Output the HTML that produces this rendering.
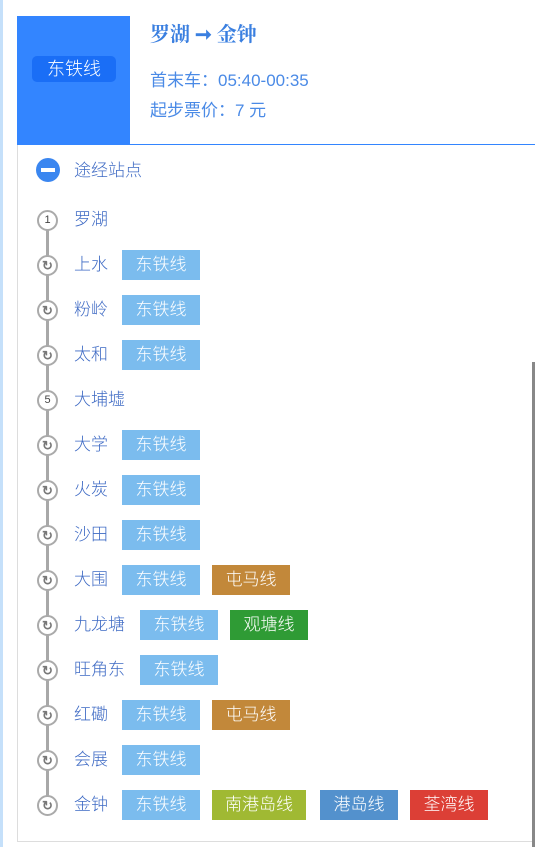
<!DOCTYPE html><html><head><meta charset="utf-8"><style>
body{margin:0;width:535px;height:847px;background:#fff;position:relative;overflow:hidden;font-family:"Liberation Sans","Noto Sans CJK SC",sans-serif}
.ab{position:absolute}
.strip{left:0;top:0;width:3px;height:847px;background:#c5e0fa}
.panel{left:17px;top:16px;width:530px;height:825px;border-left:1px solid #ddd;border-bottom:1px solid #ddd}
.hb{left:17px;top:16px;width:113px;height:129px;background:#3385ff}
.pill{left:32px;top:56px;width:84px;height:26px;background:#1a6ef6;border-radius:5px;color:#fff;font-size:18px;text-align:center;line-height:26px;font-weight:300}
.hl{left:130px;top:144px;width:405px;height:1px;background:#3385ff}
.title{left:150px;top:18px;font-size:20px;font-weight:bold;color:#3a7fe0;font-family:"Liberation Serif","Noto Serif CJK SC",serif}
.info{left:150px;font-size:17px;color:#4a8ae6}
.st{left:74px;font-size:17px;color:#3e6ac4;line-height:30px;font-weight:300}
.tag{height:30px;line-height:30px;color:#fff;font-size:17px;text-align:center;font-weight:300}
.ic{left:37px;width:17px;height:17px;border:2px solid #aaa;border-radius:50%;background:#fff;font-size:11px;text-align:center;line-height:17px;color:#444;box-sizing:content-box}
.line{left:46px;top:220px;width:3px;height:585px;background:#a8a8a8}
.sb{left:532px;top:362px;width:3px;height:485px;background:#888}
</style></head><body>
<div class="ab strip"></div>
<div class="ab panel"></div>
<div class="ab hb"></div>
<div class="ab pill">东铁线</div>
<div class="ab hl"></div>
<div class="ab title">罗湖 ➞ 金钟</div>
<div class="ab info" style="top:66px">首末车：05:40-00:35</div>
<div class="ab info" style="top:96px">起步票价：7 元</div>
<div class="ab" style="left:36px;top:158px;width:24px;height:24px;border-radius:50%;background:#3a86f0"></div>
<div class="ab" style="left:41px;top:168px;width:14px;height:4px;background:#fff"></div>
<div class="ab st" style="top:156px">途经站点</div>
<div class="ab line"></div>
<div class="ab sb"></div>
<div id="rows"></div>
<script>
var rows=[["罗湖",[],"1"],["上水",[["东铁线","#7bbcee",78]]],["粉岭",[["东铁线","#7bbcee",78]]],["太和",[["东铁线","#7bbcee",78]]],["大埔墟",[],"5"],["大学",[["东铁线","#7bbcee",78]]],["火炭",[["东铁线","#7bbcee",78]]],["沙田",[["东铁线","#7bbcee",78]]],["大围",[["东铁线","#7bbcee",78],["屯马线","#c2883a",78]]],["九龙塘",[["东铁线","#7bbcee",78],["观塘线","#2f9b35",78]]],["旺角东",[["东铁线","#7bbcee",78]]],["红磡",[["东铁线","#7bbcee",78],["屯马线","#c2883a",78]]],["会展",[["东铁线","#7bbcee",78]]],["金钟",[["东铁线","#7bbcee",78],["南港岛线","#a0b933",94],["港岛线","#5391cd",78],["荃湾线","#dc3f36",78]]]];
var h="";rows.forEach(function(r,i){var c=220+45*i;
h+='<div class="ab ic" style="top:'+(c-10)+'px">'+(r[2]?r[2]:'<span style="font-size:13px;font-weight:bold;color:#777">&#x21bb;</span>')+'</div>';
h+='<div class="ab st" style="top:'+(c-15)+'px">'+r[0]+'</div>';
var x=r[0].length==3?140:122;
r[1].forEach(function(t){h+='<div class="ab tag" style="left:'+x+'px;top:'+(c-15)+'px;width:'+t[2]+'px;background:'+t[1]+'">'+t[0]+'</div>';x+=t[2]+(t[2]==94?14:12);});
});
document.getElementById("rows").innerHTML=h;
</script>
</body></html>
